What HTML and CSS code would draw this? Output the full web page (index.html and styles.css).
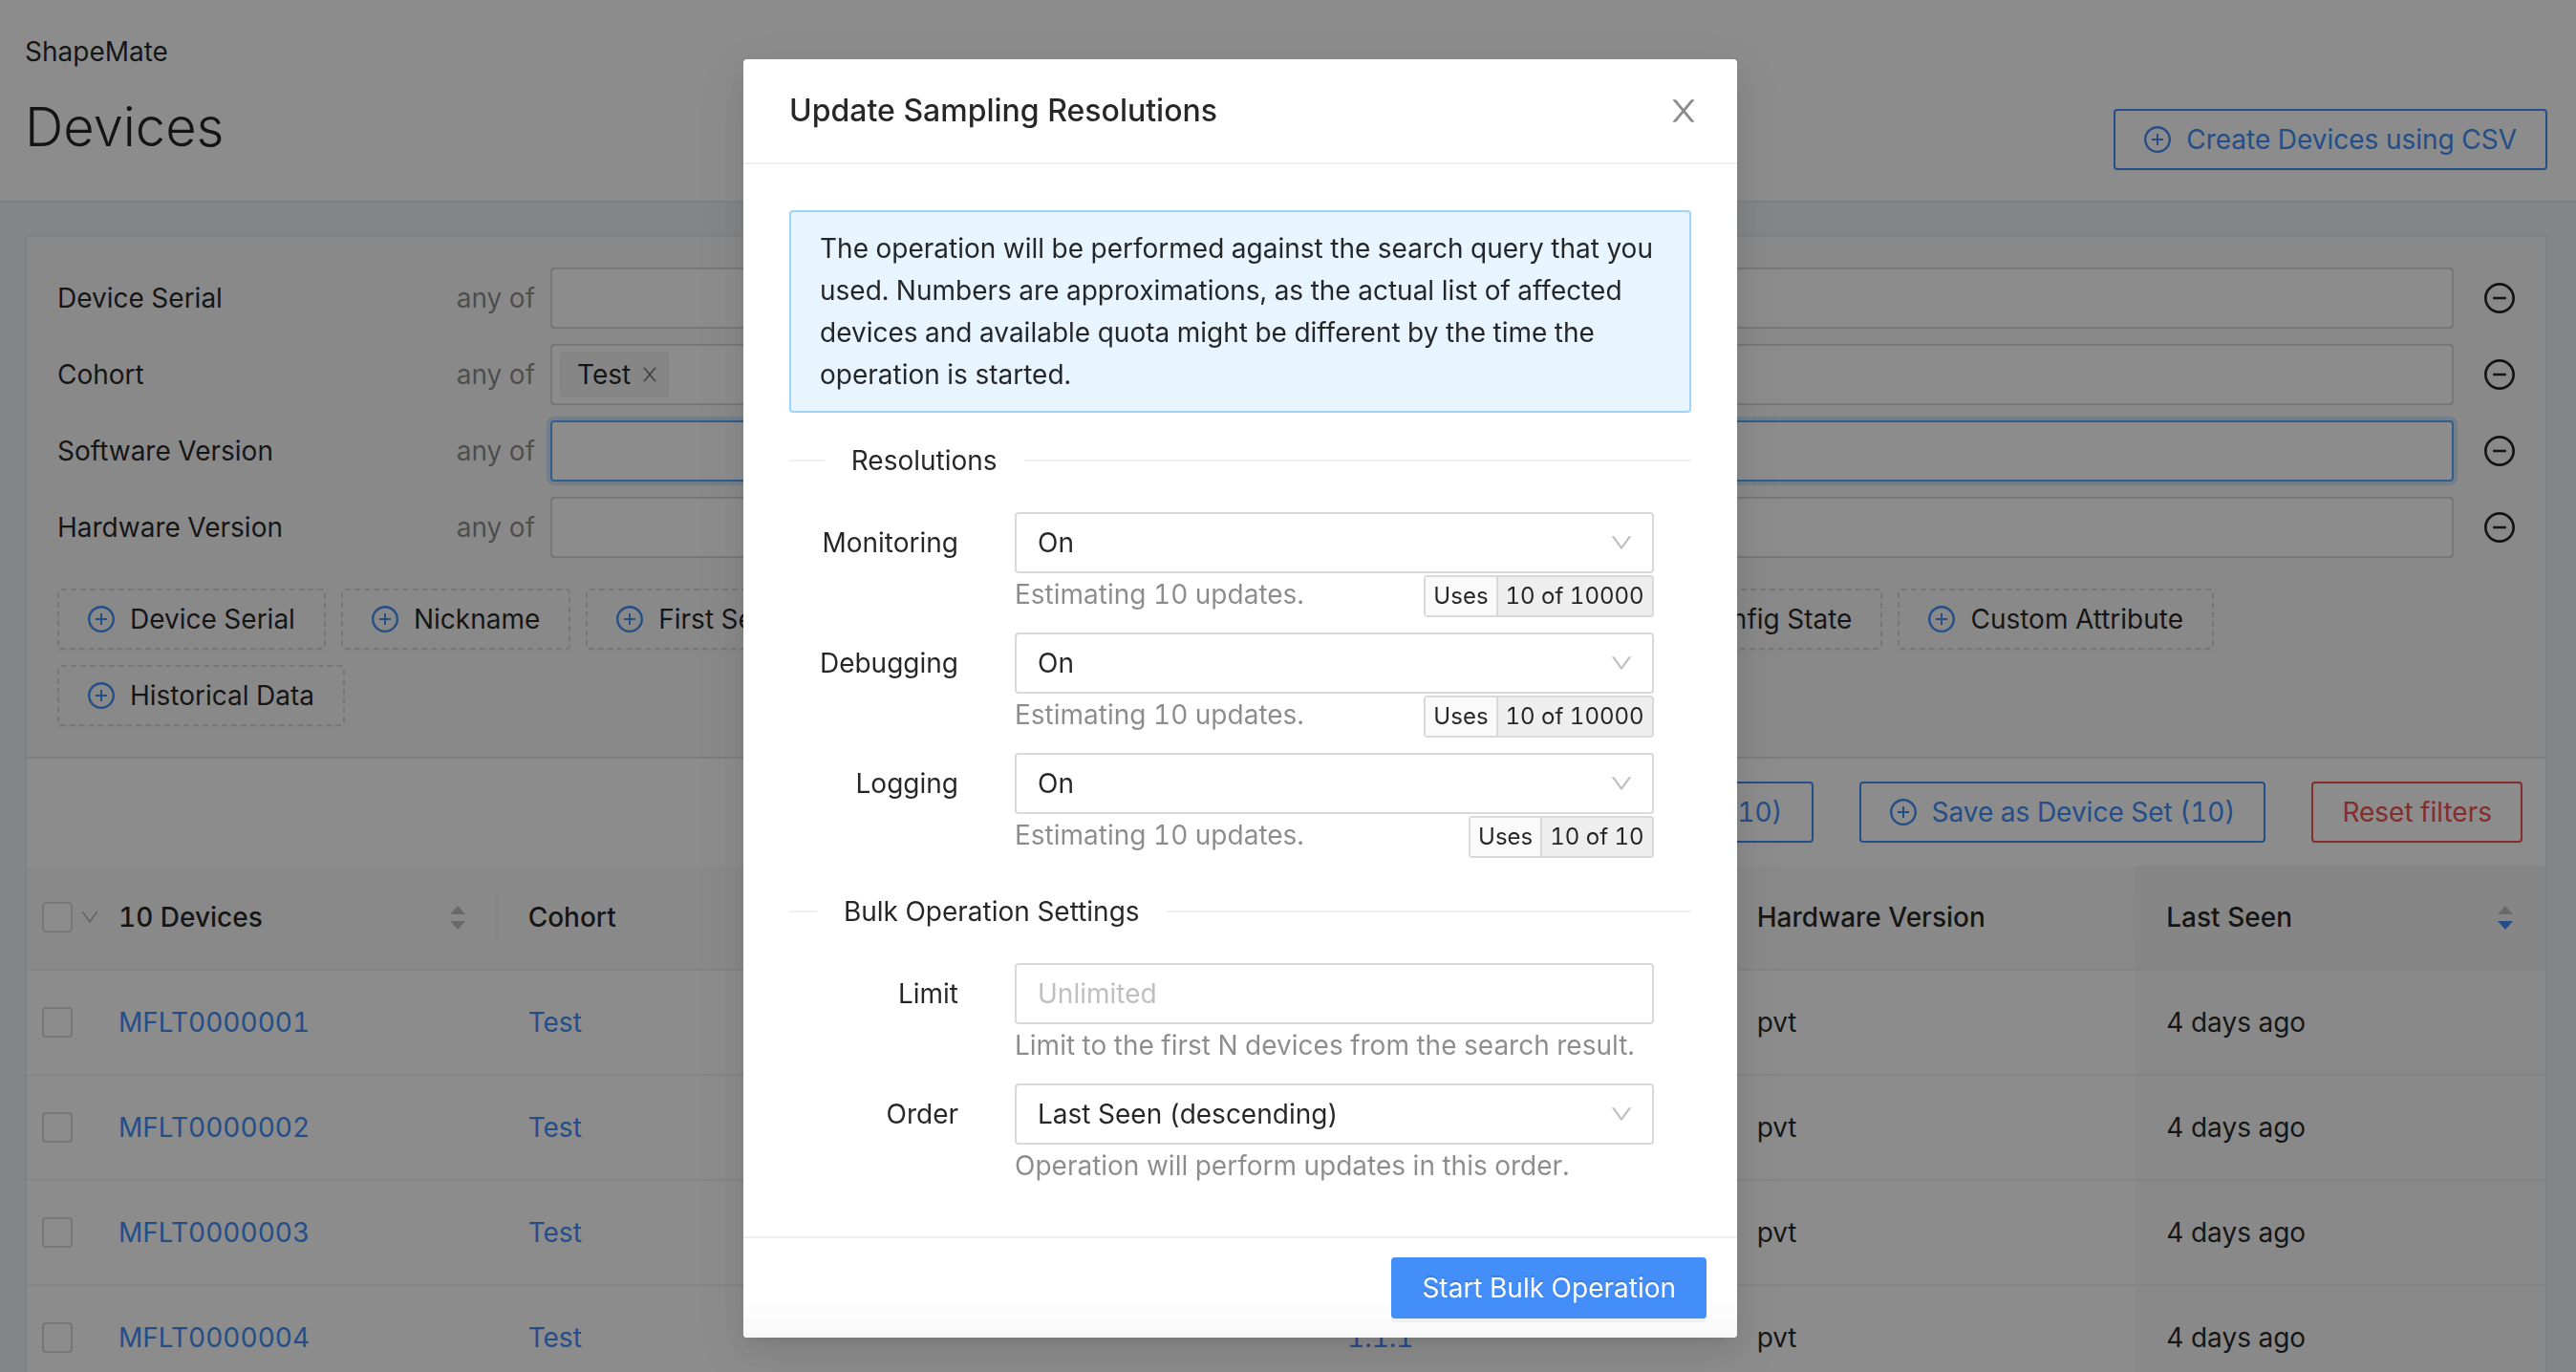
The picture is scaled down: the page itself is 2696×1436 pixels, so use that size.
FILE: index.html
```html
<!DOCTYPE html>
<html lang="en">
<head>
<meta charset="utf-8">
<meta name="viewport" content="width=device-width, initial-scale=1">
<title>Devices</title>
<link rel="stylesheet" href="styles.css">
</head>
<body>
<svg class="sprite" aria-hidden="true">
  <symbol id="plus-circle" viewBox="64 64 896 896"><path d="M696 480H544V328c0-4.400-3.600-8-8-8h-48c-4.400 0-8 3.600-8 8v152H328c-4.400 0-8 3.600-8 8v48c0 4.400 3.600 8 8 8h152v152c0 4.400 3.600 8 8 8h48c4.400 0 8-3.600 8-8V544h152c4.400 0 8-3.600 8-8v-48c0-4.400-3.600-8-8-8z"/><path d="M512 64C264.600 64 64 264.600 64 512s200.600 448 448 448 448-200.600 448-448S759.400 64 512 64zm0 820c-205.400 0-372-166.600-372-372s166.600-372 372-372 372 166.600 372 372-166.600 372-372 372z"/></symbol>
  <symbol id="minus-circle" viewBox="64 64 896 896"><path d="M696 480H328c-4.400 0-8 3.600-8 8v48c0 4.400 3.600 8 8 8h368c4.400 0 8-3.600 8-8v-48c0-4.400-3.600-8-8-8z"/><path d="M512 64C264.600 64 64 264.600 64 512s200.600 448 448 448 448-200.600 448-448S759.400 64 512 64zm0 820c-205.400 0-372-166.600-372-372s166.600-372 372-372 372 166.600 372 372-166.600 372-372 372z"/></symbol>
  <symbol id="down" viewBox="64 64 896 896"><path d="M884 256h-75c-5.100 0-9.900 2.500-12.900 6.600L512 654.200 227.900 262.600c-3-4.100-7.800-6.600-12.900-6.600h-75c-6.500 0-10.300 7.400-6.500 12.700l352.600 486.100c12.800 17.600 39 17.600 51.700 0l352.600-486.100c3.900-5.300.1-12.700-6.400-12.700z"/></symbol>
  <symbol id="close" viewBox="64 64 896 896"><path d="M563.800 512l262.500-312.900c4.400-5.200.7-13.100-6.100-13.100h-79.800c-4.700 0-9.200 2.100-12.300 5.700L511.600 449.800 295.100 191.700c-3-3.600-7.500-5.700-12.300-5.700H203c-6.800 0-10.500 7.900-6.100 13.100L459.400 512 196.900 824.900A7.950 7.950 0 0 0 203 838h79.800c4.700 0 9.200-2.100 12.300-5.700l216.500-258.100 216.500 258.100c3 3.600 7.500 5.700 12.300 5.700h79.800c6.800 0 10.500-7.900 6.100-13.100L563.800 512z"/></symbol>
  <symbol id="caret-up" viewBox="0 0 16 9"><path d="M8 0L16 9H0z"/></symbol>
  <symbol id="caret-down" viewBox="0 0 16 9"><path d="M0 0H16L8 9z"/></symbol>
</svg>

<div class="page">
  <header class="page-header">
    <div>
      <div class="project">ShapeMate</div>
      <h1 class="page-title">Devices</h1>
    </div>
    <button type="button" class="btn btn-primary-ghost"><svg class="icon"><use href="#plus-circle"/></svg>Create Devices using CSV</button>
  </header>

  <main class="content">
    <section class="card">
      <div class="filters">
        <div class="filter">
          <label class="filter-name" for="f-serial">Device Serial</label><span class="filter-op">any of</span>
          <div class="filter-box"><input class="filter-input" id="f-serial" type="text"></div>
          <button type="button" class="remove" aria-label="Remove Device Serial"><svg class="icon-lg"><use href="#minus-circle"/></svg></button>
        </div>
        <div class="filter">
          <label class="filter-name" for="f-cohort">Cohort</label><span class="filter-op">any of</span>
          <div class="filter-box"><span class="chip">Test<button type="button" class="chip-close" aria-label="Remove Test"><svg class="icon-sm"><use href="#close"/></svg></button></span><input class="filter-input" id="f-cohort" type="text"></div>
          <button type="button" class="remove" aria-label="Remove Cohort"><svg class="icon-lg"><use href="#minus-circle"/></svg></button>
        </div>
        <div class="filter">
          <label class="filter-name" for="f-software">Software Version</label><span class="filter-op">any of</span>
          <div class="filter-box is-active"><input class="filter-input" id="f-software" type="text"></div>
          <button type="button" class="remove" aria-label="Remove Software Version"><svg class="icon-lg"><use href="#minus-circle"/></svg></button>
        </div>
        <div class="filter">
          <label class="filter-name" for="f-hardware">Hardware Version</label><span class="filter-op">any of</span>
          <div class="filter-box"><input class="filter-input" id="f-hardware" type="text"></div>
          <button type="button" class="remove" aria-label="Remove Hardware Version"><svg class="icon-lg"><use href="#minus-circle"/></svg></button>
        </div>
        <div class="add-filters">
          <button type="button" class="btn btn-dashed"><svg class="icon icon-blue"><use href="#plus-circle"/></svg>Device Serial</button>
          <button type="button" class="btn btn-dashed"><svg class="icon icon-blue"><use href="#plus-circle"/></svg>Nickname</button>
          <button type="button" class="btn btn-dashed"><svg class="icon icon-blue"><use href="#plus-circle"/></svg>First Seen</button>
          <button type="button" class="btn btn-dashed"><svg class="icon icon-blue"><use href="#plus-circle"/></svg>Last Seen</button>
          <button type="button" class="btn btn-dashed"><svg class="icon icon-blue"><use href="#plus-circle"/></svg>Cohort</button>
          <button type="button" class="btn btn-dashed"><svg class="icon icon-blue"><use href="#plus-circle"/></svg>Hardware Version</button>
          <button type="button" class="btn btn-dashed"><svg class="icon icon-blue"><use href="#plus-circle"/></svg>Config State</button>
          <button type="button" class="btn btn-dashed"><svg class="icon icon-blue"><use href="#plus-circle"/></svg>Custom Attribute</button>
          <button type="button" class="btn btn-dashed"><svg class="icon icon-blue"><use href="#plus-circle"/></svg>Historical Data</button>
        </div>
      </div>

      <div class="toolbar">
        <button type="button" class="btn btn-primary-ghost">Bulk Operations (10)</button>
        <button type="button" class="btn btn-primary-ghost"><svg class="icon"><use href="#plus-circle"/></svg>Save as Device Set (10)</button>
        <button type="button" class="btn btn-danger-ghost">Reset filters</button>
      </div>

      <table class="devices">
        <colgroup><col class="col-check"><col><col><col><col><col><col></colgroup>
        <thead>
          <tr>
            <th class="cell-check"><div class="check-all"><input type="checkbox" class="check" aria-label="Select all"><svg class="icon-sm muted"><use href="#down"/></svg></div></th>
            <th><div class="head"><span>10 Devices</span><span class="sorter"><svg class="caret"><use href="#caret-up"/></svg><svg class="caret"><use href="#caret-down"/></svg></span></div></th>
            <th><div class="head">Cohort</div></th>
            <th><div class="head">Nickname</div></th>
            <th><div class="head">Software Version</div></th>
            <th><div class="head">Hardware Version</div></th>
            <th class="sorted"><div class="head"><span>Last Seen</span><span class="sorter"><svg class="caret"><use href="#caret-up"/></svg><svg class="caret caret-on"><use href="#caret-down"/></svg></span></div></th>
          </tr>
        </thead>
        <tbody>
          <tr><td class="cell-check"><input type="checkbox" class="check" aria-label="Select MFLT0000001"></td><td><a href="#">MFLT0000001</a></td><td><a href="#">Test</a></td><td></td><td><a href="#">1.1.1</a></td><td>pvt</td><td class="sorted">4 days ago</td></tr>
          <tr><td class="cell-check"><input type="checkbox" class="check" aria-label="Select MFLT0000002"></td><td><a href="#">MFLT0000002</a></td><td><a href="#">Test</a></td><td></td><td><a href="#">1.1.1</a></td><td>pvt</td><td class="sorted">4 days ago</td></tr>
          <tr><td class="cell-check"><input type="checkbox" class="check" aria-label="Select MFLT0000003"></td><td><a href="#">MFLT0000003</a></td><td><a href="#">Test</a></td><td></td><td><a href="#">1.1.1</a></td><td>pvt</td><td class="sorted">4 days ago</td></tr>
          <tr><td class="cell-check"><input type="checkbox" class="check" aria-label="Select MFLT0000004"></td><td><a href="#">MFLT0000004</a></td><td><a href="#">Test</a></td><td></td><td><a href="#">1.1.1</a></td><td>pvt</td><td class="sorted">4 days ago</td></tr>
        </tbody>
      </table>
    </section>
  </main>
</div>

<div class="modal-mask">
  <form class="modal" role="dialog" aria-modal="true" aria-labelledby="modal-title">
    <header class="modal-header">
      <h2 class="modal-title" id="modal-title">Update Sampling Resolutions</h2>
      <button type="button" class="modal-close" aria-label="Close"><svg class="icon-lg"><use href="#close"/></svg></button>
    </header>
    <div class="modal-body">
      <p class="alert">The operation will be performed against the search query that you used. Numbers are approximations, as the actual list of affected devices and available quota might be different by the time the operation is started.</p>

      <h3 class="divider"><span class="divider-text">Resolutions</span></h3>
      <div class="field">
        <label class="field-label" for="monitoring">Monitoring</label>
        <div class="field-control">
          <div class="select"><select id="monitoring"><option>On</option><option>Off</option></select><svg class="select-arrow"><use href="#down"/></svg></div>
          <div class="help"><span>Estimating 10 updates.</span><span class="usage"><span class="usage-name">Uses</span><span class="usage-value">10 of 10000</span></span></div>
        </div>
      </div>
      <div class="field">
        <label class="field-label" for="debugging">Debugging</label>
        <div class="field-control">
          <div class="select"><select id="debugging"><option>On</option><option>Off</option></select><svg class="select-arrow"><use href="#down"/></svg></div>
          <div class="help"><span>Estimating 10 updates.</span><span class="usage"><span class="usage-name">Uses</span><span class="usage-value">10 of 10000</span></span></div>
        </div>
      </div>
      <div class="field">
        <label class="field-label" for="logging">Logging</label>
        <div class="field-control">
          <div class="select"><select id="logging"><option>On</option><option>Off</option></select><svg class="select-arrow"><use href="#down"/></svg></div>
          <div class="help"><span>Estimating 10 updates.</span><span class="usage"><span class="usage-name">Uses</span><span class="usage-value">10 of 10</span></span></div>
        </div>
      </div>

      <h3 class="divider"><span class="divider-text">Bulk Operation Settings</span></h3>
      <div class="field">
        <label class="field-label" for="limit">Limit</label>
        <div class="field-control">
          <input class="text-input" id="limit" type="text" placeholder="Unlimited">
          <div class="help">Limit to the first N devices from the search result.</div>
        </div>
      </div>
      <div class="field">
        <label class="field-label" for="order">Order</label>
        <div class="field-control">
          <div class="select"><select id="order"><option>Last Seen (descending)</option><option>Last Seen (ascending)</option></select><svg class="select-arrow"><use href="#down"/></svg></div>
          <div class="help">Operation will perform updates in this order.</div>
        </div>
      </div>
    </div>
    <footer class="modal-footer">
      <button type="button" class="btn btn-primary">Start Bulk Operation</button>
    </footer>
  </form>
</div>
</body>
</html>
```
FILE: styles.css
```css
:root {
  --text: rgba(0, 0, 0, 0.85);
  --muted: rgba(0, 0, 0, 0.45);
  --faint: rgba(0, 0, 0, 0.25);
  --blue: #438ef8;
  --red: #ee5350;
  --border: #d9d9d9;
  --line: #f0f0f0;
}

* { box-sizing: border-box; }

html, body { height: 100%; }

body {
  margin: 0;
  overflow: hidden;
  background: #f0f2f5;
  color: var(--text);
  font: 400 28px/44px Inter, "Liberation Sans", sans-serif;
  font-variant-numeric: tabular-nums;
}

button, input, select { font: inherit; font-variant-numeric: inherit; color: inherit; margin: 0; }
button { cursor: pointer; }
a { color: var(--blue); text-decoration: none; }
svg { display: block; flex: none; fill: currentColor; }

.sprite { display: none; }
.icon { width: 28px; height: 28px; }
.icon-sm { width: 20px; height: 20px; }
.icon-lg { width: 32px; height: 32px; }
.icon-blue { color: var(--blue); }
.muted { color: var(--faint); }

/* Buttons */
.btn {
  display: inline-flex;
  align-items: center;
  gap: 16px;
  height: 64px;
  padding: 0 30px;
  border: 2px solid var(--border);
  border-radius: 4px;
  background: transparent;
  box-shadow: 0 4px 0 rgba(0, 0, 0, 0.016);
  white-space: nowrap;
}
.btn-dashed { border-style: dashed; }
.btn-primary-ghost { border-color: var(--blue); color: var(--blue); }
.btn-danger-ghost { border-color: var(--red); color: var(--red); }
.btn-primary {
  border-color: var(--blue);
  background: var(--blue);
  color: #fff;
  text-shadow: 0 -2px 0 rgba(0, 0, 0, 0.12);
  box-shadow: 0 4px 0 rgba(0, 0, 0, 0.045);
}

/* Page header */
.page-header {
  display: flex;
  justify-content: space-between;
  align-items: flex-end;
  padding: 32px 30px 32px 26px;
  border-bottom: 2px solid #e8e8e8;
  background: #fff;
}
.page-title {
  margin: 18px 0 6px;
  font-size: 56px;
  line-height: 78px;
  font-weight: 300;
}

.content { padding: 34px 30px 0 26px; }
.card { border: 2px solid #ebebeb; background: #fff; }

/* Filters */
.filters {
  display: flex;
  flex-direction: column;
  gap: 16px;
  padding: 32px;
  border-bottom: 2px solid #e4e4e4;
  background: #fafafa;
}
.filter { display: flex; align-items: center; gap: 16px; }
.filter-name { width: 356px; }
.filter-op { width: 128px; color: var(--muted); text-align: right; }
.filter-box {
  flex: 1;
  display: flex;
  align-items: center;
  height: 64px;
  padding: 0 8px;
  border: 2px solid var(--border);
  border-radius: 4px;
  background: #fff;
}
.filter-box.is-active { border-color: #5aa8ff; box-shadow: 0 0 0 4px rgba(64, 142, 249, 0.2); }
.filter-input { flex: 1; min-width: 0; border: 0; outline: 0; background: transparent; }
.remove { padding: 0 0 0 16px; border: 0; background: none; }
.chip {
  display: flex;
  align-items: center;
  gap: 10px;
  height: 48px;
  padding: 0 8px 0 16px;
  border: 2px solid var(--line);
  border-radius: 4px;
  background: #f5f5f5;
}
.chip-close { padding: 0; border: 0; background: none; color: var(--muted); }
.add-filters { display: flex; flex-wrap: wrap; gap: 16px; padding: 16px 240px 0 0; }

.toolbar { display: flex; justify-content: flex-end; gap: 48px; padding: 24px; }

/* Table */
.devices { width: 100%; table-layout: fixed; border-collapse: separate; border-spacing: 0; }
.col-check { width: 64px; }
.devices th, .devices td {
  height: 110px;
  padding: 0 32px;
  border-bottom: 2px solid var(--line);
  text-align: left;
  font-weight: 400;
}
.devices th { padding-right: 0; background: #fafafa; font-weight: 500; }
.devices .cell-check { padding: 0 0 0 16px; }
.devices td.sorted { background: #fafafa; }
.devices th.sorted { border-top-right-radius: 4px; background: #f5f5f5; }
.head {
  display: flex;
  align-items: center;
  justify-content: space-between;
  height: 46px;
  padding-right: 32px;
  border-right: 2px solid var(--line);
}
.sorted .head { border-right-color: transparent; }
.sorter { display: grid; gap: 7px; color: #bfbfbf; }
.caret { width: 16px; height: 9px; }
.caret-on { color: var(--blue); }
.check-all { display: flex; align-items: center; gap: 8px; }
.check {
  appearance: none;
  display: block;
  flex: none;
  width: 32px;
  height: 32px;
  border: 2px solid var(--border);
  border-radius: 4px;
  background: #fff;
}

/* Modal */
.modal-mask {
  position: fixed;
  inset: 0;
  display: flex;
  justify-content: center;
  align-items: flex-start;
  padding: 62px 100px 0 0;
  background: rgba(0, 0, 0, 0.45);
}
.modal {
  width: 1040px;
  max-width: 100%;
  border-radius: 4px;
  background: #fff;
  box-shadow: 0 6px 12px -8px rgba(0, 0, 0, 0.12), 0 12px 32px rgba(0, 0, 0, 0.08), 0 18px 56px 16px rgba(0, 0, 0, 0.05);
}
.modal-header {
  display: flex;
  justify-content: space-between;
  align-items: center;
  padding: 32px 40px 32px 48px;
  border-bottom: 2px solid var(--line);
}
.modal-title { margin: 0; font-size: 32px; line-height: 44px; font-weight: 500; }
.modal-close { padding: 0; border: 0; background: none; color: var(--muted); }
.modal-body { padding: 48px 48px 34px; }
.alert {
  margin: 0;
  padding: 16px 30px;
  border: 2px solid #9fd3fb;
  border-radius: 4px;
  background: #e8f5fe;
}
.divider {
  display: flex;
  align-items: center;
  margin: 36px 0 32px;
  font-size: 28px;
  line-height: 44px;
  font-weight: 400;
  white-space: nowrap;
}
.alert + .divider { margin-top: 28px; }
.divider::before, .divider::after { content: ""; width: 5%; border-top: 2px solid var(--line); }
.divider::after { width: 95%; }
.divider-text { padding: 0 28px; }
.field { display: grid; grid-template-columns: 6fr 17fr 1fr; margin-bottom: 18px; }
.field-label { padding-right: 59px; line-height: 64px; text-align: right; }
.select { display: grid; align-items: center; }
.select > * { grid-area: 1 / 1; }
.select select, .text-input {
  width: 100%;
  height: 64px;
  padding: 0 22px;
  border: 2px solid var(--border);
  border-radius: 4px;
  background: #fff;
  appearance: none;
}
.text-input { display: block; }
.text-input::placeholder { color: #bfbfbf; opacity: 1; }
.select-arrow { justify-self: end; width: 24px; height: 24px; margin-right: 22px; color: var(--faint); pointer-events: none; }
.help { display: flex; justify-content: space-between; height: 44px; color: var(--muted); }
.usage {
  display: flex;
  height: 44px;
  margin-top: 2px;
  border: 2px solid var(--border);
  border-radius: 4px;
  background: #eee;
  color: var(--text);
  font-size: 24px;
  line-height: 40px;
}
.usage-name { padding: 0 8px; border-right: 2px solid var(--border); background: #fafafa; }
.usage-value { padding: 0 8px; }
.modal-footer {
  display: flex;
  justify-content: flex-end;
  padding: 20px 32px;
  border-top: 2px solid var(--line);
  border-radius: 0 0 4px 4px;
  background: linear-gradient(#fff 60%, #f8f8f8);
}
```
